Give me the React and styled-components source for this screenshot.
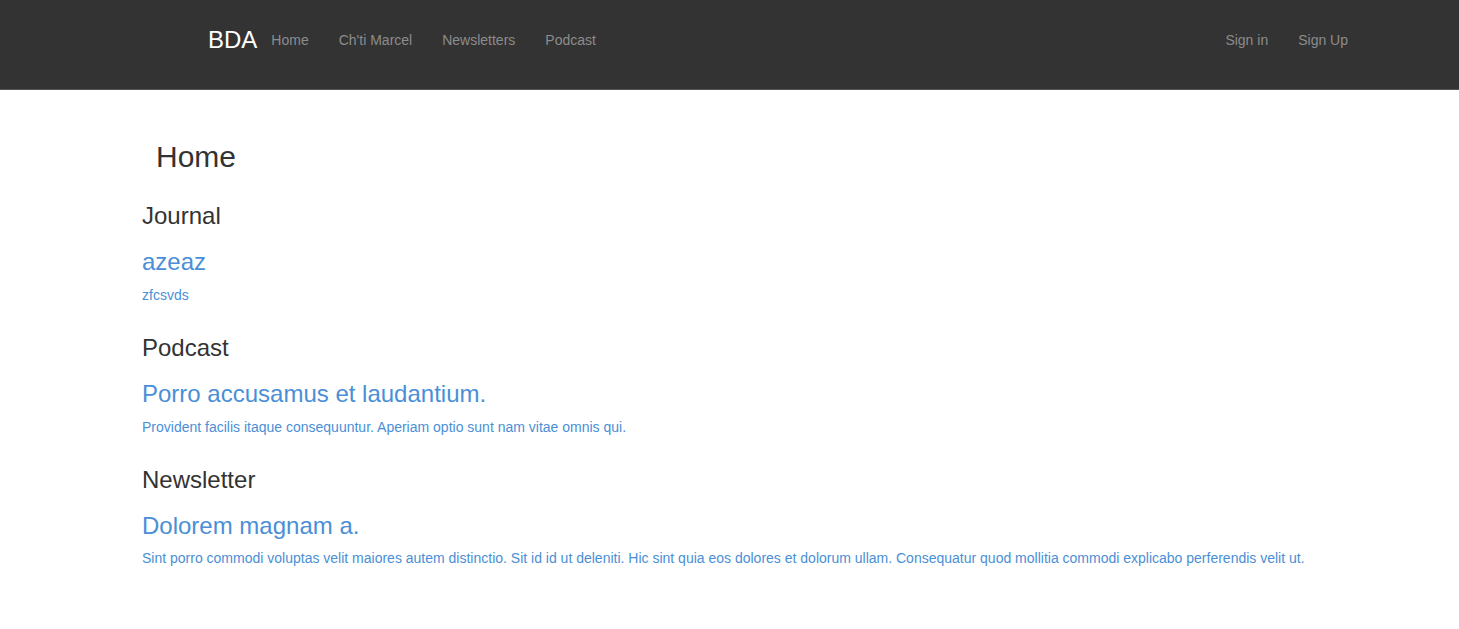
import React from 'react';
import styled, { createGlobalStyle } from 'styled-components';

const GlobalStyle = createGlobalStyle`
  body {
    margin: 0;
    background: #fff;
    font-family: "Liberation Sans", Arial, sans-serif;
    font-size: 14px;
    line-height: 20px;
    color: #333;
  }
  * { box-sizing: border-box; }
`;

const navLinks = ['Home', "Ch'ti Marcel", 'Newsletters', 'Podcast'];
const authLinks = ['Sign in', 'Sign Up'];

const sections = [
  {
    title: 'Journal',
    heading: 'azeaz',
    summary: 'zfcsvds',
  },
  {
    title: 'Podcast',
    heading: 'Porro accusamus et laudantium.',
    summary: 'Provident facilis itaque consequuntur. Aperiam optio sunt nam vitae omnis qui.',
  },
  {
    title: 'Newsletter',
    heading: 'Dolorem magnam a.',
    summary:
      'Sint porro commodi voluptas velit maiores autem distinctio. Sit id id ut deleniti. Hic sint quia eos dolores et dolorum ullam. Consequatur quod mollitia commodi explicabo perferendis velit ut.',
  },
];

const App = () => {
  return (
    <>
      <GlobalStyle />
      <Navbar>
        <NavInner>
          <Brand href="#">BDA</Brand>
          <NavList>
            {navLinks.map((link) => (
              <NavItem key={link} href="#">
                {link}
              </NavItem>
            ))}
          </NavList>
          <NavList>
            {authLinks.map((link) => (
              <NavItem key={link} href="#">
                {link}
              </NavItem>
            ))}
          </NavList>
        </NavInner>
      </Navbar>
      <Main>
        <PageTitle>Home</PageTitle>
        {sections.map((section) => (
          <Section key={section.title}>
            <SectionTitle>{section.title}</SectionTitle>
            <ItemTitle href="#">{section.heading}</ItemTitle>
            <ItemSummary href="#">{section.summary}</ItemSummary>
          </Section>
        ))}
      </Main>
    </>
  );
};

const Navbar = styled.nav`
  background: #333;
  height: 90px;
  border-bottom: 1px solid #555;
`;
const NavInner = styled.div`
  display: flex;
  align-items: center;
  height: 100%;
  padding: 0 96px 9px 193px;
`;
const Brand = styled.a`
  padding: 0 0 0 15px;
  margin-right: -1px;
  font-size: 24px;
  line-height: 30px;
  color: #fff;
  text-decoration: none;
`;
const NavList = styled.div`
  display: flex;
  &:last-child {
    margin-left: auto;
  }
`;
const NavItem = styled.a`
  padding: 0 15px;
  font-size: 14px;
  line-height: 20px;
  color: #8c8c8c;
  text-decoration: none;
`;
const Main = styled.main`
  display: flex;
  flex-direction: column;
  padding: 50px 0 40px 142px;
`;
const PageTitle = styled.h2`
  margin: 0 0 30px 14px;
  font-size: 30px;
  line-height: 33px;
  font-weight: 400;
  color: #333;
`;
const Section = styled.section`
  display: flex;
  flex-direction: column;
  align-items: flex-start;
  margin-bottom: 30px;
`;
const SectionTitle = styled.h3`
  margin: 0 0 20px;
  font-size: 24px;
  line-height: 26.4px;
  font-weight: 400;
  color: #333;
`;
const ItemTitle = styled.a`
  margin-bottom: 9px;
  font-size: 24px;
  line-height: 26.4px;
  color: #4a8fd6;
  text-decoration: none;
`;
const ItemSummary = styled.a`
  font-size: 14px;
  line-height: 20px;
  color: #4a8fd6;
  text-decoration: none;
`;

export default App;
